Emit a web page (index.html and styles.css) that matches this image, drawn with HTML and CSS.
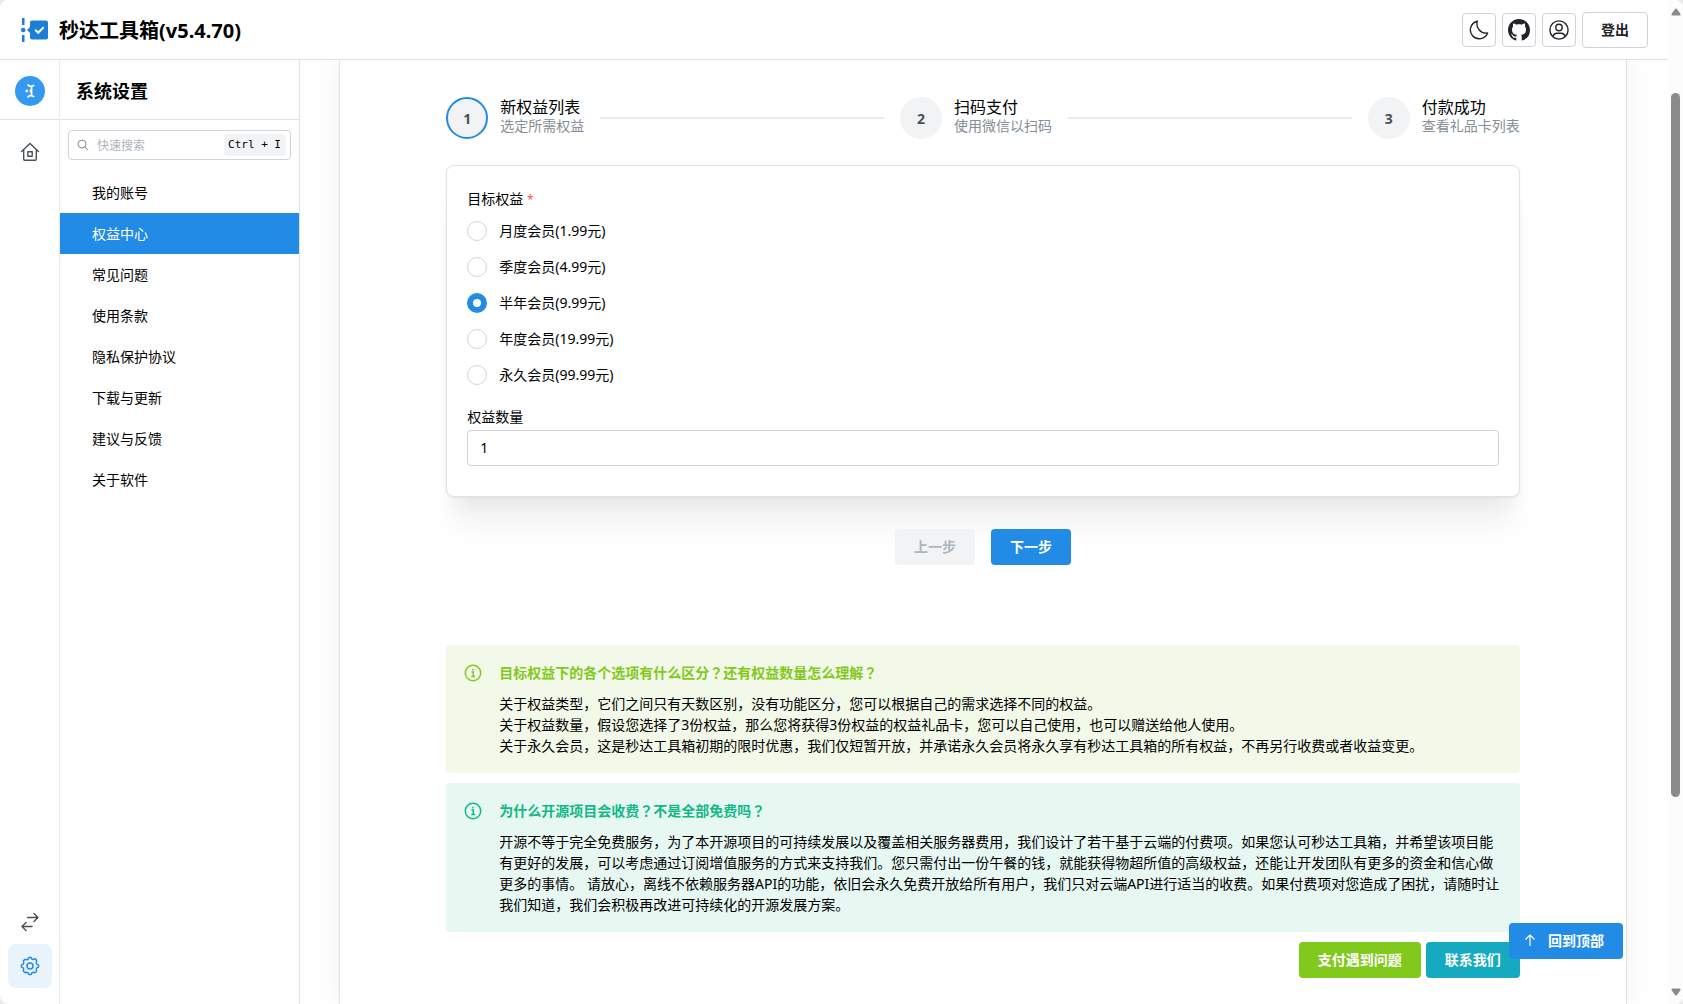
FILE: index.html
```html
<!DOCTYPE html>
<html lang="zh-CN">
<head>
<meta charset="utf-8">
<meta name="viewport" content="width=device-width, initial-scale=1">
<title>秒达工具箱</title>
<link rel="stylesheet" href="styles.css">
</head>
<body>
<div class="window">
  <div class="app">
    <header class="topbar">
      <svg class="logo" viewBox="0 0 28 24" aria-hidden="true">
        <g fill="#1c7ed6">
          <rect x="2" y="0" width="2.500" height="7"/>
          <rect x="2" y="17" width="2.500" height="7"/>
          <circle cx="3.200" cy="12" r="2.300"/>
          <path d="M7 12l4-4v8z"/>
          <rect x="10" y="2.500" width="18" height="19" rx="2"/>
        </g>
        <path d="M15.200 11.800l3 3 5.500-5.500" fill="none" stroke="#fff" stroke-width="2"/>
      </svg>
      <h1 class="brand">秒达工具箱(v5.4.70)</h1>
      <div class="actions">
        <button class="icon-btn" type="button" aria-label="深色模式">
          <svg viewBox="0 0 20 20" width="20" height="20"><path d="M8.300 1.200a8.900 8.900 0 1 0 10.300 11.800 9.300 9.300 0 0 1-10.300-11.800z" fill="none" stroke="#212529" stroke-width="1.400" stroke-linejoin="round"/></svg>
        </button>
        <button class="icon-btn" type="button" aria-label="GitHub">
          <svg viewBox="0 0 16 16" width="22" height="22"><path fill="#212529" d="M8 0C3.580 0 0 3.580 0 8c0 3.540 2.290 6.530 5.470 7.590.4.070.55-.17.55-.38 0-.19-.01-.82-.01-1.490-2.010.37-2.530-.49-2.690-.94-.09-.23-.48-.94-.82-1.130-.28-.15-.68-.52-.01-.53.63-.01 1.080.58 1.230.82.72 1.210 1.870.87 2.330.66.070-.52.28-.87.51-1.070-1.780-.2-3.640-.89-3.640-3.950 0-.87.31-1.590.82-2.150-.08-.2-.36-1.020.08-2.120 0 0 .67-.21 2.200.82.64-.18 1.320-.27 2-.27s1.360.09 2 .27c1.530-1.040 2.200-.82 2.200-.82.44 1.100.16 1.920.08 2.120.51.56.82 1.270.82 2.150 0 3.070-1.870 3.750-3.650 3.950.29.25.54.73.54 1.480 0 1.070-.01 1.930-.01 2.200 0 .21.15.46.55.38A8.010 8.010 0 0 0 16 8c0-4.420-3.580-8-8-8z"/></svg>
        </button>
        <button class="icon-btn" type="button" aria-label="账号">
          <svg viewBox="0 0 20 20" width="20" height="20" fill="none" stroke="#212529" stroke-width="1.400"><circle cx="10" cy="10" r="9.100"/><circle cx="10" cy="7.500" r="3.200"/><path d="M3.800 16.500c.8-2.300 2.200-3.300 4-3.300h4.400c1.800 0 3.200 1 4 3.300"/></svg>
        </button>
        <button class="btn btn-outline" type="button">登出</button>
      </div>
    </header>

    <nav class="rail" aria-label="主导航">
      <div class="rail-head">
        <svg viewBox="0 0 30 30" width="30" height="30" aria-hidden="true">
          <circle cx="15" cy="15" r="15" fill="#339af0"/>
          <g fill="none" stroke="#fff" stroke-width="1.800"><path d="M12.500 8.500c1 1.400 2 1.800 3.500 1.800s2.500-.5 3-1.200M12.500 21.500c1-1.400 2-1.800 3.500-1.800s2.500.5 3 1.200M16.500 10.300v9.400"/></g>
          <circle cx="11.800" cy="15" r="1.400" fill="#fff"/><path d="M14 15l2.500-2v4z" fill="#fff"/>
        </svg>
      </div>
      <div class="rail-links">
        <a class="rail-link" href="#home" aria-label="首页">
          <svg viewBox="0 0 20 20" width="20" height="20" fill="none" stroke="#495057" stroke-width="1.400" stroke-linejoin="round" stroke-linecap="round"><path d="M1.500 9.500L10 1.500l8.500 8M3.700 8v9.200q0 1 1 1h10.600q1 0 1-1V8"/><rect x="7.800" y="9.800" width="4.400" height="4.400"/></svg>
        </a>
        <a class="rail-link rail-push" href="#switch" aria-label="切换">
          <svg viewBox="0 0 20 20" width="20" height="20" fill="none" stroke="#495057" stroke-width="1.400" stroke-linejoin="round" stroke-linecap="round"><path d="M7.500 5.500h10.500M14 1.500l4 4-4 4M12 14.500H2M6 10.500l-4 4 4 4"/></svg>
        </a>
        <a class="rail-link is-active" href="#settings" aria-label="设置">
          <svg viewBox="0 0 20 20" width="20" height="20" fill="none" stroke="#228be6" stroke-width="1.500" stroke-linejoin="round"><path d="M8.200 3q.3-1.700 1.800-1.700T11.800 3q.9.700 2 .2 1.400-.9 2.400.6t.1 2.400q-.3 1.200.7 2 1.700.3 1.700 1.800T17 11.800q-.900.900-.7 2 .9 1.400-.6 2.400t-2.400.1q-1-.1-1.500.7-.3 1.700-1.800 1.700T8.200 17q-.9-.9-2-.7-1.400.9-2.400-.6t-.1-2.400q.1-1-.7-1.500-1.700-.3-1.700-1.800T3 8.200q.9-.9.7-2-.9-1.400.6-2.400t2.400-.1q1 .1 1.500-.7z"/><circle cx="10" cy="10" r="3"/></svg>
        </a>
      </div>
    </nav>

    <aside class="sidebar">
      <h2 class="sidebar-title">系统设置</h2>
      <label class="search">
        <svg viewBox="0 0 12 12" width="12" height="12" fill="none" stroke="#868e96" aria-hidden="true"><circle cx="5" cy="5" r="4"/><path d="M8 8l3.200 3.200"/></svg>
        <input class="search-input" type="search" placeholder="快速搜索" aria-label="快速搜索">
        <kbd class="kbd">Ctrl + I</kbd>
      </label>
      <ul class="menu">
        <li><a class="menu-link" href="#account">我的账号</a></li>
        <li><a class="menu-link is-active" href="#benefits">权益中心</a></li>
        <li><a class="menu-link" href="#faq">常见问题</a></li>
        <li><a class="menu-link" href="#terms">使用条款</a></li>
        <li><a class="menu-link" href="#privacy">隐私保护协议</a></li>
        <li><a class="menu-link" href="#update">下载与更新</a></li>
        <li><a class="menu-link" href="#feedback">建议与反馈</a></li>
        <li><a class="menu-link" href="#about">关于软件</a></li>
      </ul>
    </aside>

    <main class="main">
      <div class="paper">
        <div class="content">
          <ol class="steps">
            <li class="step"><span class="step-num is-current">1</span><span class="step-text"><span class="step-title">新权益列表</span><span class="step-desc">选定所需权益</span></span></li>
            <li class="step-line" aria-hidden="true"></li>
            <li class="step"><span class="step-num">2</span><span class="step-text"><span class="step-title">扫码支付</span><span class="step-desc">使用微信以扫码</span></span></li>
            <li class="step-line" aria-hidden="true"></li>
            <li class="step"><span class="step-num">3</span><span class="step-text"><span class="step-title">付款成功</span><span class="step-desc">查看礼品卡列表</span></span></li>
          </ol>

          <form class="card">
            <fieldset class="plans">
              <legend class="label">目标权益 <span class="required">*</span></legend>
              <label class="plan"><input class="radio" type="radio" name="plan">月度会员(1.99元)</label>
              <label class="plan"><input class="radio" type="radio" name="plan">季度会员(4.99元)</label>
              <label class="plan"><input class="radio" type="radio" name="plan" checked>半年会员(9.99元)</label>
              <label class="plan"><input class="radio" type="radio" name="plan">年度会员(19.99元)</label>
              <label class="plan"><input class="radio" type="radio" name="plan">永久会员(99.99元)</label>
            </fieldset>
            <label class="label" for="amount">权益数量</label>
            <input class="field" id="amount" type="text" inputmode="numeric" value="1">
          </form>

          <div class="step-actions">
            <button class="btn" type="button" disabled>上一步</button>
            <button class="btn btn-blue" type="button">下一步</button>
          </div>

          <div class="notes">
            <section class="note note-lime">
              <svg class="note-icon" viewBox="0 0 18 18" width="18" height="18" fill="none" stroke="currentColor" stroke-width="1.500" aria-hidden="true"><circle cx="9" cy="9" r="7.700"/><path d="M7.500 8h1.800v4.500M7.300 12.500h3.800M9 4.800v1.700"/></svg>
              <div>
                <h3 class="note-title">目标权益下的各个选项有什么区分<span class="mark" lang="zh-TW">？</span>还有权益数量怎么理解<span class="mark" lang="zh-TW">？</span></h3>
                <p class="note-text">关于权益类型，它们之间只有天数区别，没有功能区分，您可以根据自己的需求选择不同的权益。<br>关于权益数量，假设您选择了3份权益，那么您将获得3份权益的权益礼品卡，您可以自己使用，也可以赠送给他人使用。<br>关于永久会员，这是秒达工具箱初期的限时优惠，我们仅短暂开放，并承诺永久会员将永久享有秒达工具箱的所有权益，不再另行收费或者收益变更。</p>
              </div>
            </section>
            <section class="note note-teal">
              <svg class="note-icon" viewBox="0 0 18 18" width="18" height="18" fill="none" stroke="currentColor" stroke-width="1.500" aria-hidden="true"><circle cx="9" cy="9" r="7.700"/><path d="M7.500 8h1.800v4.500M7.300 12.500h3.800M9 4.800v1.700"/></svg>
              <div>
                <h3 class="note-title">为什么开源项目会收费<span class="mark" lang="zh-TW">？</span>不是全部免费吗<span class="mark" lang="zh-TW">？</span></h3>
                <p class="note-text">开源不等于完全免费服务，为了本开源项目的可持续发展以及覆盖相关服务器费用，我们设计了若干基于云端的付费项。如果您认可秒达工具箱，并希望该项目能有更好的发展，可以考虑通过订阅增值服务的方式来支持我们。您只需付出一份午餐的钱，就能获得物超所值的高级权益，还能让开发团队有更多的资金和信心做更多的事情。 请放心，离线不依赖服务器API的功能，依旧会永久免费开放给所有用户，我们只对云端API进行适当的收费。如果付费项对您造成了困扰，请随时让我们知道，我们会积极再改进可持续化的开源发展方案。</p>
              </div>
            </section>
            <div class="help">
              <button class="btn btn-lime" type="button">支付遇到问题</button>
              <button class="btn btn-cyan" type="button">联系我们</button>
            </div>
          </div>
        </div>
      </div>
    </main>
  </div>

  <div class="scrollbar" aria-hidden="true">
    <svg viewBox="0 0 10 8" width="10" height="8"><path d="M4 1q1-1 2 0l3.500 5q.5 1.500-1 1.500h-7q-1.500 0-1-1.500z" fill="#8b8b8b"/></svg>
    <div class="track"><div class="thumb"></div></div>
    <svg viewBox="0 0 10 8" width="10" height="8"><path d="M4 7q1 1 2 0l3.500-5q.5-1.500-1-1.500h-7q-1.500 0-1 1.500z" fill="#8b8b8b"/></svg>
  </div>
</div>

<button class="btn btn-blue to-top" type="button">
  <svg viewBox="0 0 12 12" width="12" height="12" fill="none" stroke="currentColor" stroke-width="1.200" aria-hidden="true"><path d="M6 12V1M1.500 5.500L6 1l4.500 4.500"/></svg>
  回到顶部
</button>
</body>
</html>
```
FILE: styles.css
```css
* {
  box-sizing: border-box;
}

body {
  margin: 0;
  background: #e9e9e9;
  color: #000;
  font: 14px/21px "Noto Sans", "Noto Sans CJK SC", sans-serif;
}

h1, h2, h3, p, ul, ol {
  margin: 0;
  padding: 0;
}

ul, ol {
  list-style: none;
}

a {
  color: inherit;
  text-decoration: none;
}

svg {
  display: block;
  flex: none;
}

.window {
  display: grid;
  grid-template-columns: 1fr 15px;
  min-height: 100vh;
  border-radius: 8px;
  background: #fefefe;
  overflow: hidden;
}

.app {
  display: grid;
  grid-template-columns: 60px 240px 1fr;
  grid-template-rows: 60px 1fr;
  min-width: 0;
}

/* Top bar */
.topbar {
  grid-column: 1 / -1;
  position: relative;
  z-index: 1;
  display: flex;
  align-items: center;
  padding: 1px 20px 0;
  border-bottom: 1px solid #dee2e6;
  background: #fff;
}

.logo {
  width: 28px;
  height: 24px;
}

.brand {
  margin-left: 11px;
  padding-top: 2px;
  font-size: 20px;
  line-height: 30px;
}

.actions {
  display: flex;
  align-items: center;
  gap: 6px;
  margin-left: auto;
}

.icon-btn {
  display: grid;
  place-items: center;
  width: 34px;
  height: 34px;
  padding: 0;
  border: 1px solid #ced4da;
  border-radius: 4px;
  background: #fff;
}

.btn {
  height: 36px;
  padding: 0 19px 2px;
  border: 0;
  border-radius: 4px;
  font: bold 14px/21px "Noto Sans", "Noto Sans CJK SC", sans-serif;
  color: #fff;
}

.btn:disabled {
  background: #f1f3f5;
  color: #adb5bd;
}

.btn-outline {
  padding: 0 18px 2px;
  border: 1px solid #ced4da;
  background: #fff;
  color: #212529;
}

.btn-blue {
  background: #228be6;
}

.btn-lime {
  background: #82c91e;
}

.btn-cyan {
  background: #15aabf;
}

/* Icon rail */
.rail {
  display: flex;
  flex-direction: column;
  border-right: 1px solid #e9ecef;
}

.rail-head {
  display: grid;
  place-items: center;
  height: 60px;
  padding-top: 2px;
  border-bottom: 1px solid #dee2e6;
}

.rail-links {
  flex: 1;
  display: flex;
  flex-direction: column;
  align-items: center;
  padding: 10px 0 16px;
}

.rail-link {
  display: grid;
  place-items: center;
  width: 44px;
  height: 44px;
  border-radius: 8px;
}

.rail-link.is-active {
  background: #e8f3fc;
}

.rail-push {
  margin-top: auto;
}

/* Settings sidebar */
.sidebar {
  border-right: 1px solid #dee2e6;
}

.sidebar-title {
  height: 60px;
  padding: 18px 16px 0;
  border-bottom: 1px solid #dee2e6;
  font-size: 18px;
  line-height: 27px;
}

.search {
  display: flex;
  align-items: center;
  height: 30px;
  margin: 10px 8px 12px;
  padding: 0 4px 0 8px;
  border: 1px solid #ced4da;
  border-radius: 4px;
  background: #fff;
}

.search-input {
  flex: 1;
  min-width: 0;
  padding: 1px 8px 0;
  border: 0;
  outline: 0;
  background: none;
  font: 12px/18px "Noto Sans", "Noto Sans CJK SC", sans-serif;
}

.search-input::placeholder {
  color: #adb5bd;
}

.kbd {
  padding: 0 5px 0 4px;
  border-radius: 4px;
  background: #f1f3f5;
  font: 11px/22px "DejaVu Sans Mono", monospace;
}

.menu-link {
  display: block;
  padding: 10px 32px;
}

.menu-link.is-active {
  background: #228be6;
  color: #fff;
}

/* Main column */
.main {
  display: flex;
  min-width: 0;
  padding: 0 41px 0 39px;
  overflow: hidden;
}

.paper {
  flex: 1;
  display: grid;
  grid-template-columns: 1fr minmax(0, 10fr) 1fr;
  padding: 37px 0 20px;
  background: #fff;
  box-shadow: inset 1px 0 #dee2e6, inset -1px 0 #dee2e6, 0 0 20px rgba(0, 0, 0, .05);
}

.content {
  grid-column: 2;
}

.steps {
  display: flex;
  align-items: center;
  gap: 16px;
}

.step {
  display: flex;
  align-items: center;
  gap: 12px;
}

.step-num {
  display: grid;
  place-items: center;
  width: 42px;
  height: 42px;
  border: 2px solid #f1f3f5;
  border-radius: 50%;
  background: #f1f3f5;
  color: #495057;
  font-weight: bold;
}

.step-num.is-current {
  border-color: #228be6;
}

.step-text {
  display: grid;
  padding-bottom: 4px;
}

.step-title {
  font-size: 16px;
  line-height: 20px;
}

.step-desc {
  line-height: 18px;
  color: #868e96;
}

.step-line {
  flex: 1;
  height: 2px;
  background: #e9ecef;
}

.card {
  margin-top: 26px;
  padding: 20px 20px 30px;
  border: 1px solid #dee2e6;
  border-radius: 8px;
  background: #fff;
  box-shadow: 0 1px 3px rgba(0, 0, 0, .05), 0 36px 28px -7px rgba(0, 0, 0, .05), 0 17px 17px -7px rgba(0, 0, 0, .04);
}

.plans {
  display: grid;
  gap: 16px;
  margin: 0 0 19px;
  padding: 9px 0 0;
  border: 0;
}

.label {
  display: block;
  padding: 0;
  line-height: 26px;
}

.required {
  color: #fa5252;
  font-size: 12px;
  line-height: 1;
}

.plan {
  display: flex;
  align-items: center;
  gap: 12px;
  height: 20px;
  line-height: 18px;
}

.radio {
  appearance: none;
  width: 20px;
  height: 20px;
  margin: 0;
  border: 1px solid #ced4da;
  border-radius: 50%;
  background: #fff;
}

.radio:checked {
  border: 6px solid #228be6;
}

.field {
  display: block;
  width: 100%;
  height: 36px;
  padding: 0 12px 1px;
  border: 1px solid #ced4da;
  border-radius: 4px;
  background: #fff;
  font: inherit;
}

.step-actions {
  display: flex;
  justify-content: center;
  gap: 16px;
  margin: 32px 0 80px;
}

.notes {
  display: grid;
  gap: 10px;
}

.note {
  display: flex;
  gap: 17px;
  padding: 16px 18px 17px;
  border-radius: 4px;
}

.note-lime {
  background: #f2f9e8;
  color: #82c91e;
}

.note-teal {
  background: #e7f7f2;
  color: #12b886;
}

.note-icon {
  margin-top: 3px;
}

.note-title {
  margin-bottom: 9px;
  font-size: 14px;
  line-height: 23px;
}

/* Question marks sit in the middle of their em box */
.mark {
  font-family: "Noto Sans CJK TC", sans-serif;
  line-height: 1;
}

.note-text {
  color: #000;
}

.help {
  display: flex;
  justify-content: flex-end;
  gap: 5px;
}

.to-top {
  position: fixed;
  right: 60px;
  bottom: 45px;
  z-index: 2;
  display: flex;
  align-items: center;
  gap: 12px;
  padding: 0 19px 2px 15px;
}

/* Page scrollbar */
.scrollbar {
  display: flex;
  flex-direction: column;
  align-items: center;
  padding: 8px 0;
  background: #fcfcfc;
}

.track {
  flex: 1;
  display: grid;
  grid-template-rows: 77fr 704fr 191fr;
}

.thumb {
  grid-row: 2;
  width: 9px;
  border-radius: 5px;
  background: #8b8b8b;
}
```
